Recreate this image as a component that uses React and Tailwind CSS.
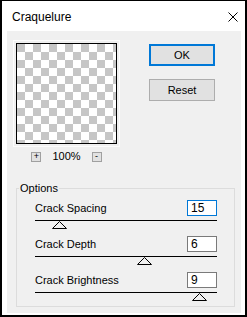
import React from "react";

const sliders = [
  { label: "Crack Spacing", value: 15, min: 2, max: 100, focused: true },
  { label: "Crack Depth", value: 6, min: 0, max: 10 },
  { label: "Crack Brightness", value: 9, min: 0, max: 10 },
];

const TRACK = 182;

const Slider = ({ label, value, min, max, focused }) => {
  const left = Math.round(((value - min) / (max - min)) * TRACK) - 7;
  return (
    <div className="flex flex-col">
      <div className="flex items-center justify-between h-[16px]">
        <span className="text-[11px] leading-none">{label}</span>
        <div
          className={
            "w-[30px] h-[16px] bg-white flex items-center px-[3px] text-[12px] leading-none border " +
            (focused ? "border-[#0078d7]" : "border-[#7a7a7a]")
          }
        >
          {value}
        </div>
      </div>
      <div className="mt-[4px] h-[1px] bg-black" />
      <div className="relative h-[8px]">
        <svg
          width="15"
          height="8"
          viewBox="0 0 15 8"
          className="absolute top-0"
          style={{ left }}
        >
          <polygon points="7.5,0.5 14.5,7.5 0.5,7.5" fill="#f0f0f0" stroke="#000" strokeWidth="1" />
        </svg>
      </div>
    </div>
  );
};

export default function App() {
  return (
    <div className="w-[247px] h-[317px] bg-white border-black border-t border-x-2 border-b-2 flex flex-col text-black font-['Liberation_Sans',Arial,sans-serif]">
      {/* title bar */}
      <div className="h-[30px] shrink-0 flex items-center justify-between pl-[10px] pr-[7px] pt-[2px]">
        <span className="text-[12px] leading-none">Craquelure</span>
        <svg width="10" height="10" viewBox="0 0 10 10">
          <path d="M0.5 0.5 L9.5 9.5 M9.5 0.5 L0.5 9.5" stroke="#000" strokeWidth="1" />
        </svg>
      </div>

      {/* client area */}
      <div className="flex-1 ml-[5px] mr-[4px] mb-[2px] bg-[#f0f0f0] flex flex-col">
        <div className="flex pl-[6px] pt-[9px]">
          <div className="w-[107px] flex flex-col">
            <div className="border border-[#fcfcfc] p-[2px]">
              <div className="border border-black h-[101px] bg-[image:repeating-conic-gradient(#fff_0_25%,#c6c6c6_0_50%)] bg-[length:16px_16px]" />
            </div>
            <div className="mt-[4px] flex items-center justify-center gap-[11px]">
              <div className="w-[10px] h-[10px] bg-[#e1e1e1] border border-[#a0a0a0] flex items-center justify-center text-[9px] leading-none">
                +
              </div>
              <span className="text-[11px] leading-none">100%</span>
              <div className="w-[10px] h-[10px] bg-[#e1e1e1] border border-[#a0a0a0] flex items-center justify-center text-[9px] leading-none">
                -
              </div>
            </div>
          </div>
          <div className="ml-[29px] pt-[4px] flex flex-col gap-[13px]">
            <button className="w-[66px] h-[22px] bg-[#e1e1e1] border-2 border-[#0078d7] text-[11px] leading-none">
              OK
            </button>
            <button className="w-[66px] h-[22px] bg-[#e1e1e1] border border-[#adadad] text-[11px] leading-none">
              Reset
            </button>
          </div>
        </div>

        {/* options group */}
        <div className="relative ml-[9px] w-[219px] mt-[26px] border border-[#dcdcdc] pt-[11px] pl-[18px] pr-[17px] pb-[5px] flex flex-col gap-[7px]">
          <span className="absolute left-[2px] -top-[7px] bg-[#f0f0f0] px-[1px] text-[11px] leading-[13px]">
            Options
          </span>
          {sliders.map((s) => (
            <Slider key={s.label} {...s} />
          ))}
        </div>
      </div>
    </div>
  );
}
